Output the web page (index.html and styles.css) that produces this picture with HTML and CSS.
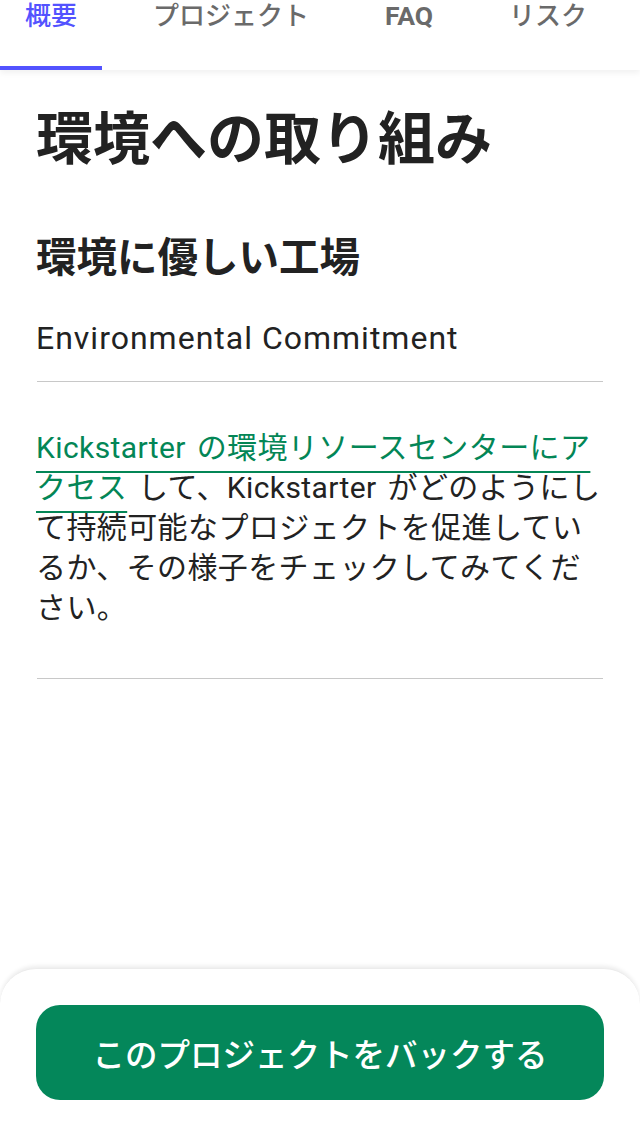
FILE: index.html
```html
<!DOCTYPE html>
<html lang="ja">
<head>
<meta charset="utf-8">
<title>環境への取り組み</title>
<link rel="stylesheet" href="styles.css">
</head>
<body>
<nav class="tabs">
  <a class="tab active">概要</a>
  <a class="tab">プロジェクト</a>
  <a class="tab tab-latin">FAQ</a>
  <a class="tab">リスク</a>
</nav>
<main class="content">
  <h1 class="title">環境への取り組み</h1>
  <h2 class="subtitle">環境に優しい工場</h2>
  <p class="lead">Environmental Commitment</p>
  <hr class="rule">
  <p class="body"><a class="link">Kickstarter の環境リソースセンターにアクセス</a> して、Kickstarter がどのようにして持続可能なプロジェクトを促進しているか、その様子をチェックしてみてください。</p>
  <hr class="rule rule-end">
</main>
<div class="sheet">
  <button class="back-btn">このプロジェクトをバックする</button>
</div>
</body>
</html>
```
FILE: styles.css
```css
* { box-sizing: border-box; }
html, body {
  margin: 0;
  padding: 0;
  background: #ffffff;
  font-family: Roboto, "Noto Sans CJK JP", sans-serif;
  color: #222222;
}
.tabs {
  display: flex;
  align-items: flex-start;
  gap: 26px;
  height: 70px;
  background: #fff;
  box-shadow: 0 3px 6px rgba(0,0,0,0.06);
  position: relative;
  z-index: 1;
}
.tab {
  display: block;
  height: 70px;
  padding: 0 25px;
  font-size: 26px;
  line-height: 32px;
  font-weight: 500;
  color: #6a6a6a;
  border-bottom: 4px solid transparent;
}
.tab-latin {
  font-weight: 700;
  font-size: 26.5px;
}
.tab.active {
  color: #5353ff;
  border-bottom-color: #5353ff;
}
.content {
  padding: 38px 36px 0;
}
.title {
  margin: 0;
  font-size: 57px;
  line-height: 64px;
  font-weight: 700;
  color: #222;
}
.subtitle {
  margin: 62px 0 0;
  font-size: 40.5px;
  line-height: 48px;
  font-weight: 700;
  color: #222;
}
.lead {
  margin: 36px 0 0;
  font-size: 32px;
  line-height: 40px;
  letter-spacing: 1px;
  color: #222;
}
.rule {
  margin: 23px 1px 0;
  border: 0;
  height: 1px;
  background: #c8c8c8;
}
.body {
  margin: 46px 0 0;
  font-size: 30px;
  line-height: 40px;
  letter-spacing: 0.4px;
  word-spacing: 3px;
  color: #222;
}
.link {
  color: #038656;
  text-decoration: underline;
  text-decoration-thickness: 2px;
  text-underline-offset: 13px;
}
.rule-end {
  margin-top: 50px;
}
.sheet {
  position: fixed;
  left: 0;
  right: 0;
  bottom: 0;
  height: 168px;
  padding: 36px 36px 37px;
  background: #fff;
  border-radius: 36px 36px 0 0;
  box-shadow: 0 -2px 4px rgba(0,0,0,0.08);
  border-top: 1px solid #ececec;
}
.back-btn {
  display: block;
  width: 100%;
  height: 95px;
  border: 0;
  border-radius: 24px;
  background: #04875a;
  color: #ffffff;
  font-family: "Noto Sans CJK JP", Roboto, sans-serif;
  font-size: 32.5px;
  font-weight: 500;
}
```
